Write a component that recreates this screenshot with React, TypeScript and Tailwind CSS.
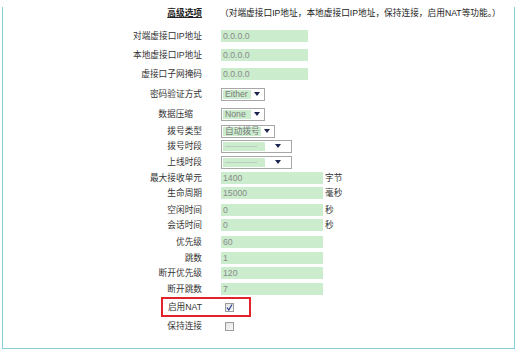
import type { ReactNode } from "react";

const font = { fontFamily: '"Liberation Sans", "Noto Sans CJK SC", sans-serif' };

function Arrow() {
  return (
    <svg width="6" height="4" viewBox="0 0 6 4">
      <polygon points="0,0 6,0 3,4" fill="#1c2450" />
    </svg>
  );
}

function Row({
  label,
  mt,
  pr = "",
  children,
}: {
  label: string;
  mt: string;
  pr?: string;
  children: ReactNode;
}) {
  return (
    <div className={`flex items-center h-[12px] ${mt}`}>
      <div className={`w-[199px] text-right leading-none text-[#333] ${pr}`}>{label}</div>
      <div className="ml-[19px] flex items-center h-full">{children}</div>
    </div>
  );
}

function Field({ value, w, unit }: { value: string; w: string; unit?: string }) {
  return (
    <>
      <div
        className={`${w} h-[12px] bg-[#cbeccd] text-[#8a8a8a] pl-[2px] leading-[12px]`}
      >
        {value}
      </div>
      {unit && <span className="ml-[2px] text-[#333] leading-none">{unit}</span>}
    </>
  );
}

function Select({
  value,
  w,
  green,
  dim,
}: {
  value: string;
  w: string;
  green: string;
  dim?: boolean;
}) {
  return (
    <div
      className={`${w} h-[13px] border border-[#a7a7a7] bg-white flex items-stretch p-[1px]`}
    >
      <div
        className={`${green} bg-[#cbeccd] leading-[9px] pl-[2px] whitespace-nowrap ${
          dim ? "text-[#9a9a9a] text-[6px]" : "text-[#7a7a7a]"
        }`}
      >
        {value}
      </div>
      <div className="flex-1 flex items-center justify-center">
        <Arrow />
      </div>
    </div>
  );
}

function Check({ checked }: { checked?: boolean }) {
  return (
    <div className="w-[9px] h-[9px] border border-[#9c9c9c] bg-gradient-to-br from-[#e4e4e4] to-[#f8f8f8] flex items-center justify-center">
      {checked && (
        <svg width="7" height="7" viewBox="0 0 7 7">
          <polyline
            points="1,3.5 2.8,6 6,0.5"
            fill="none"
            stroke="#2a3f8f"
            strokeWidth="1.2"
          />
        </svg>
      )}
    </div>
  );
}

export default function App() {
  return (
    <div className="w-[519px] h-[352px] bg-white overflow-hidden text-[8.7px]" style={font}>
      <div className="ml-[2px] mt-[7px] w-[513px] h-[342px] border-l border-r border-b border-[#86cfd6]">
        <div className="flex items-center h-[14px]">
          <div className="w-[199px] text-right">
            <span className="font-bold underline text-[#222]">高级选项</span>
          </div>
          <div className="ml-[18px] text-[#222] whitespace-nowrap">
            （对端虚接口IP地址，本地虚接口IP地址，保持连接，启用NAT等功能。）
          </div>
        </div>

        <Row label="对端虚接口IP地址" mt="mt-[9px]">
          <Field value="0.0.0.0" w="w-[87px]" />
        </Row>
        <Row label="本地虚接口IP地址" mt="mt-[7px]">
          <Field value="0.0.0.0" w="w-[87px]" />
        </Row>
        <Row label="虚接口子网掩码" mt="mt-[7px]">
          <Field value="0.0.0.0" w="w-[87px]" />
        </Row>
        <Row label="密码验证方式" mt="mt-[8px]">
          <Select value="Either" w="w-[44px]" green="w-[28px]" />
        </Row>
        <Row label="数据压缩" mt="mt-[8px]" pr="pr-[9px]">
          <Select value="None" w="w-[44px]" green="w-[28px]" />
        </Row>
        <Row label="拨号类型" mt="mt-[5px]">
          <Select value="自动拨号" w="w-[54px]" green="w-[38px]" />
        </Row>
        <Row label="拨号时段" mt="mt-[3px]">
          <Select value="----------------" w="w-[71px]" green="w-[42px]" dim />
        </Row>
        <Row label="上线时段" mt="mt-[4px]">
          <Select value="----------------" w="w-[71px]" green="w-[42px]" dim />
        </Row>
        <Row label="最大接收单元" mt="mt-[4px]">
          <Field value="1400" w="w-[102px]" unit="字节" />
        </Row>
        <Row label="生命周期" mt="mt-[3px]">
          <Field value="15000" w="w-[102px]" unit="毫秒" />
        </Row>
        <Row label="空闲时间" mt="mt-[5px]">
          <Field value="0" w="w-[102px]" unit="秒" />
        </Row>
        <Row label="会话时间" mt="mt-[3px]">
          <Field value="0" w="w-[102px]" unit="秒" />
        </Row>
        <Row label="优先级" mt="mt-[5px]">
          <Field value="60" w="w-[102px]" />
        </Row>
        <Row label="跳数" mt="mt-[4px]">
          <Field value="1" w="w-[102px]" />
        </Row>
        <Row label="断开优先级" mt="mt-[3px]">
          <Field value="120" w="w-[102px]" />
        </Row>
        <Row label="断开跳数" mt="mt-[4px]">
          <Field value="7" w="w-[102px]" />
        </Row>

        <div className="relative mt-[2px] h-[20px] flex items-center">
          <div className="w-[199px] text-right leading-none text-[#333]">启用NAT</div>
          <div className="ml-[23px]">
            <Check checked />
          </div>
          <span className="absolute left-[158px] top-0 w-[90px] h-[20px] border-2 border-[#e2232a] pointer-events-none" />
        </div>
        <div className="mt-[3px] h-[12px] flex items-center">
          <div className="w-[199px] text-right leading-none text-[#333]">保持连接</div>
          <div className="ml-[23px]">
            <Check />
          </div>
        </div>
      </div>
    </div>
  );
}
